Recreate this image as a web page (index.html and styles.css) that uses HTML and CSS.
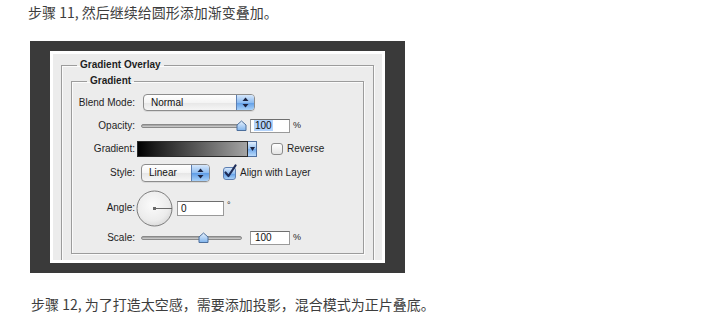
FILE: index.html
```html
<!DOCTYPE html>
<html lang="zh">
<head>
<meta charset="utf-8">
<title>步骤 11</title>
<link rel="stylesheet" href="styles.css">
</head>
<body>
<p class="step">步骤 11, 然后继续给圆形添加渐变叠加。</p>
<div class="frame">
  <div class="panel">
    <fieldset class="outer">
      <legend>Gradient Overlay</legend>
      <fieldset class="inner">
        <legend>Gradient</legend>
        <div class="row r-blend">
          <span class="label">Blend Mode:</span>
          <div class="popup popup-blend">
            <span class="popup-text">Normal</span>
            <span class="popup-btn"><svg width="7" height="11" viewBox="0 0 7 11"><polygon points="3.5,0.5 6.5,4 0.5,4" fill="#1b2240"/><polygon points="0.5,7 6.5,7 3.5,10.5" fill="#1b2240"/></svg></span>
          </div>
        </div>
        <div class="row r-opacity">
          <span class="label">Opacity:</span>
          <div class="slider">
            <span class="track"></span>
            <svg class="thumb thumb-opacity" width="11" height="11" viewBox="0 0 11 11"><defs><linearGradient id="tg1" x1="0" y1="0" x2="0" y2="1"><stop offset="0" stop-color="#e8f2fd"/><stop offset="1" stop-color="#7fb3ec"/></linearGradient></defs><polygon points="1,10.5 1,5 5.5,1 10,5 10,10.5" fill="url(#tg1)" stroke="#4d6f9c" stroke-width="1"/></svg>
          </div>
          <span class="field field-pct"><span class="sel">100</span></span>
          <span class="unit">%</span>
        </div>
        <div class="row r-gradient">
          <span class="label">Gradient:</span>
          <div class="gbar"></div>
          <span class="gbtn"><svg width="5" height="4" viewBox="0 0 5 4"><polygon points="0,0 5,0 2.5,4" fill="#1b2240"/></svg></span>
          <span class="check"></span>
          <span class="check-text">Reverse</span>
        </div>
        <div class="row r-style">
          <span class="label">Style:</span>
          <div class="popup popup-style">
            <span class="popup-text">Linear</span>
            <span class="popup-btn"><svg width="7" height="11" viewBox="0 0 7 11"><polygon points="3.5,0.5 6.5,4 0.5,4" fill="#1b2240"/><polygon points="0.5,7 6.5,7 3.5,10.5" fill="#1b2240"/></svg></span>
          </div>
          <span class="check checked"><svg width="14" height="15" viewBox="0 0 14 15"><path d="M2.5 8.5 L5.5 12 L12.5 1.5" fill="none" stroke="#1d2c58" stroke-width="2.2" stroke-linecap="round" stroke-linejoin="round"/></svg></span>
          <span class="check-text">Align with Layer</span>
        </div>
        <div class="row r-angle">
          <span class="label">Angle:</span>
          <svg class="dial" width="37" height="37" viewBox="0 0 37 37"><defs><radialGradient id="dg" cx="0.45" cy="0.4" r="0.65"><stop offset="0" stop-color="#fbfbfb"/><stop offset="0.7" stop-color="#ececec"/><stop offset="1" stop-color="#d6d6d6"/></radialGradient></defs><circle cx="18.5" cy="18.5" r="17.5" fill="url(#dg)" stroke="#7c7c7c" stroke-width="1"/><line x1="18.5" y1="18.5" x2="36" y2="18.5" stroke="#6a6a6a" stroke-width="1"/><rect x="17" y="17" width="3" height="3" fill="#6a6a6a"/></svg>
          <span class="field field-angle">0</span>
          <span class="deg">°</span>
        </div>
        <div class="row r-scale">
          <span class="label">Scale:</span>
          <div class="slider slider-scale">
            <span class="track"></span>
            <svg class="thumb thumb-scale" width="11" height="11" viewBox="0 0 11 11"><defs><linearGradient id="tg2" x1="0" y1="0" x2="0" y2="1"><stop offset="0" stop-color="#e8f2fd"/><stop offset="1" stop-color="#7fb3ec"/></linearGradient></defs><polygon points="1,10.5 1,5 5.5,1 10,5 10,10.5" fill="url(#tg2)" stroke="#4d6f9c" stroke-width="1"/></svg>
          </div>
          <span class="field field-pct">100</span>
          <span class="unit">%</span>
        </div>
      </fieldset>
    </fieldset>
  </div>
</div>
<p class="step step2">步骤 12, 为了打造太空感，需要添加投影，混合模式为正片叠底。</p>
</body>
</html>
```

FILE: styles.css
```css
html, body {
  margin: 0;
  padding: 0;
  background: #fff;
}

body {
  width: 720px;
  height: 336px;
  overflow: hidden;
}

.step {
  margin: 0;
  padding: 2px 0 0 28px;
  font: 14px/20px "Noto Sans CJK SC", "Liberation Sans", sans-serif;
  color: #3d3d3d;
}

.step2 {
  padding: 0 0 0 31px;
  margin-top: 21px;
}

.frame {
  margin: 19px 0 0 30px;
  width: 375px;
  height: 232px;
  box-sizing: border-box;
  padding: 10px 20px;
  background: #3a3a3a;
}

.panel {
  width: 335px;
  height: 212px;
  box-sizing: border-box;
  border: 3px solid #fff;
  background: #ececec;
  overflow: hidden;
  font-family: "Liberation Sans", Arial, sans-serif;
  font-size: 10px;
  color: #1e1e1e;
}

fieldset {
  margin: 0;
  min-width: 0;
  border: 1px solid #9c9c9c;
  box-shadow: 1px 1px 0 #fbfbfb, inset 1px 1px 0 #fbfbfb;
}

legend {
  font-weight: bold;
  font-size: 10px;
  line-height: 12px;
  padding: 0 3px;
  color: #1e1e1e;
}

.outer {
  margin: 5px 8px 0 8px;
  padding: 4px 9px 40px 9px;
}

.outer > legend {
  margin-left: 6px;
}

.inner {
  padding: 7px 0 8px 0;
  display: flex;
  flex-direction: column;
}

.inner > legend {
  margin-left: 15px;
}

.row {
  display: flex;
  align-items: center;
}

.label {
  width: 63px;
  flex: none;
  text-align: right;
  line-height: 12px;
}

.r-blend { height: 17px; }
.r-opacity { height: 14px; margin-top: 8px; }
.r-gradient { height: 16px; margin-top: 8px; }
.r-style { height: 18px; margin-top: 7px; }
.r-angle { height: 36px; margin-top: 8px; }
.r-scale { height: 14px; margin-top: 5px; }

/* popup menus */
.popup {
  margin-left: 8px;
  display: flex;
  box-sizing: border-box;
  border: 1px solid #8c8c8c;
  border-radius: 4px;
  background: linear-gradient(#ffffff, #f4f4f4 50%, #e6e6e6 51%, #f6f6f6);
  box-shadow: 0 1px 0 rgba(0,0,0,0.08);
  overflow: hidden;
}

.popup-blend { width: 112px; height: 17px; }
.popup-style { width: 69px; height: 18px; margin-left: 6px; }

.popup-text {
  flex: 1;
  padding-left: 7px;
  line-height: 15px;
  color: #111;
}

.popup-btn {
  width: 17px;
  flex: none;
  display: flex;
  align-items: center;
  justify-content: center;
  border-left: 1px solid #5d7fb2;
  background: linear-gradient(#d6e7fb, #8dbcf1 50%, #5e9ce6 51%, #a8d1f9);
}

/* sliders */
.slider {
  position: relative;
  margin-left: 6px;
  width: 106px;
  height: 11px;
  display: flex;
  align-items: center;
}

.track {
  display: block;
  width: 99px;
  height: 4px;
  box-sizing: border-box;
  border: 1px solid #8a8a8a;
  border-radius: 2px;
  background: linear-gradient(#9a9a9a, #d4d4d4);
}

.slider-scale .track {
  width: 101px;
}

.thumb {
  position: absolute;
  top: -1px;
}

.thumb-opacity { left: 95px; }
.thumb-scale { left: 57px; }

.field {
  box-sizing: border-box;
  height: 14px;
  width: 40px;
  border: 1px solid #9a9a9a;
  border-top-color: #6e6e6e;
  background: #fff;
  line-height: 12px;
  padding-left: 4px;
  color: #111;
}

.field-pct {
  margin-left: 3px;
}

.sel {
  background: #b3d3fb;
  padding: 0 1px;
  margin-left: -1px;
}

.unit {
  margin-left: 3px;
  font-size: 9px;
  align-self: flex-start;
  line-height: 12px;
}

/* gradient */
.gbar {
  margin-left: 2px;
  width: 111px;
  height: 16px;
  box-sizing: border-box;
  border: 1px solid #2b2b2b;
  background: linear-gradient(to right, #000 0%, #1c1c1c 15%, #5a5a5a 55%, #a4a4a4 100%);
}

.gbtn {
  width: 9px;
  height: 16px;
  box-sizing: border-box;
  border: 1px solid #4f6f9f;
  border-left: none;
  background: linear-gradient(#e2eefc, #8fbef2 50%, #6ea6ea 51%, #b9dafa);
  display: flex;
  align-items: center;
  justify-content: center;
}

.check {
  width: 12px;
  height: 12px;
  box-sizing: border-box;
  border: 1px solid #8a8a8a;
  border-radius: 3px;
  background: linear-gradient(#ffffff, #e4e4e4);
  margin-left: 14px;
  position: relative;
}

.check.checked {
  margin-left: 13px;
  width: 13px;
  height: 13px;
  border-color: #5d7fb2;
  background: linear-gradient(#d6e7fb, #8dbcf1 50%, #5e9ce6 51%, #a8d1f9);
}

.check.checked svg {
  position: absolute;
  left: -1px;
  top: -4px;
}

.check-text {
  margin-left: 4px;
  line-height: 12px;
}

/* angle */
.dial {
  margin-left: 1px;
  flex: none;
}

.field-angle {
  width: 47px;
  height: 15px;
  margin-left: 4px;
  line-height: 13px;
  padding-left: 3px;
}

.deg {
  margin-left: 3px;
  align-self: flex-start;
  margin-top: 11px;
  font-size: 9px;
  line-height: 9px;
}
```
